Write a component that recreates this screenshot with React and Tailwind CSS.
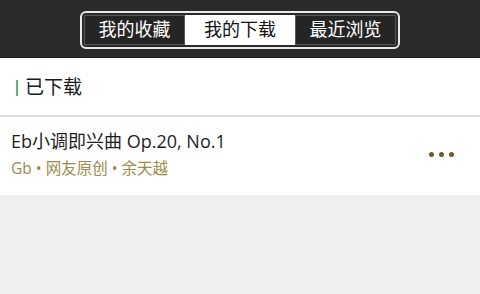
import React from "react";

export default function App() {
  const tabs = ["我的收藏", "我的下载", "最近浏览"];
  const active = 1;

  return (
    <div
      className="w-[480px] h-[294px] bg-[#efefef] flex flex-col"
      style={{ fontFamily: '"Open Sans", "Noto Sans CJK SC", sans-serif' }}
    >
      {/* 顶部标签栏 */}
      <div className="h-[58px] bg-[#2a2a2a] border-b border-[#1a1a1a] flex items-center justify-center">
        <div className="flex border-2 border-[#e8e8e8] rounded-[6px] p-[2px] mt-[2px]">
          {tabs.map((t, i) => (
            <div
              key={t}
              className={
                i === active
                  ? "h-[30px] w-[110px] flex items-center justify-center bg-white text-[#111] text-[18px]"
                  : "h-[30px] w-[101px] flex items-center justify-center bg-[#252525] border border-[#555] text-white text-[18px]"
              }
            >
              {t}
            </div>
          ))}
        </div>
      </div>

      {/* 标题 */}
      <div className="h-[59px] bg-white flex items-center pl-[16px] border-b-2 border-[#dcdcdc]">
        <div className="w-[2px] h-[16px] bg-[#5cb87a] mr-[7px] mt-[2px]" />
        <span className="text-[19px] text-[#1a1a1a] mt-[2px]">已下载</span>
      </div>

      {/* 列表项 */}
      <div className="h-[78px] bg-white flex items-center pl-[11px] pr-[26px]">
        <div className="flex-1 flex flex-col mt-[-4px]">
          <span className="text-[18px] text-[#1e1e1e] leading-[22px]">Eb小调即兴曲 Op.20, No.1</span>
          <span className="text-[15.5px] text-[#a08a4c] leading-[20px] mt-[6px]">Gb • 网友原创 • 余天越</span>
        </div>
        <div className="flex gap-[5px] mt-[-4px]">
          <span className="w-[5px] h-[5px] rounded-full bg-[#6e5a24]" />
          <span className="w-[5px] h-[5px] rounded-full bg-[#6e5a24]" />
          <span className="w-[5px] h-[5px] rounded-full bg-[#6e5a24]" />
        </div>
      </div>
    </div>
  );
}
